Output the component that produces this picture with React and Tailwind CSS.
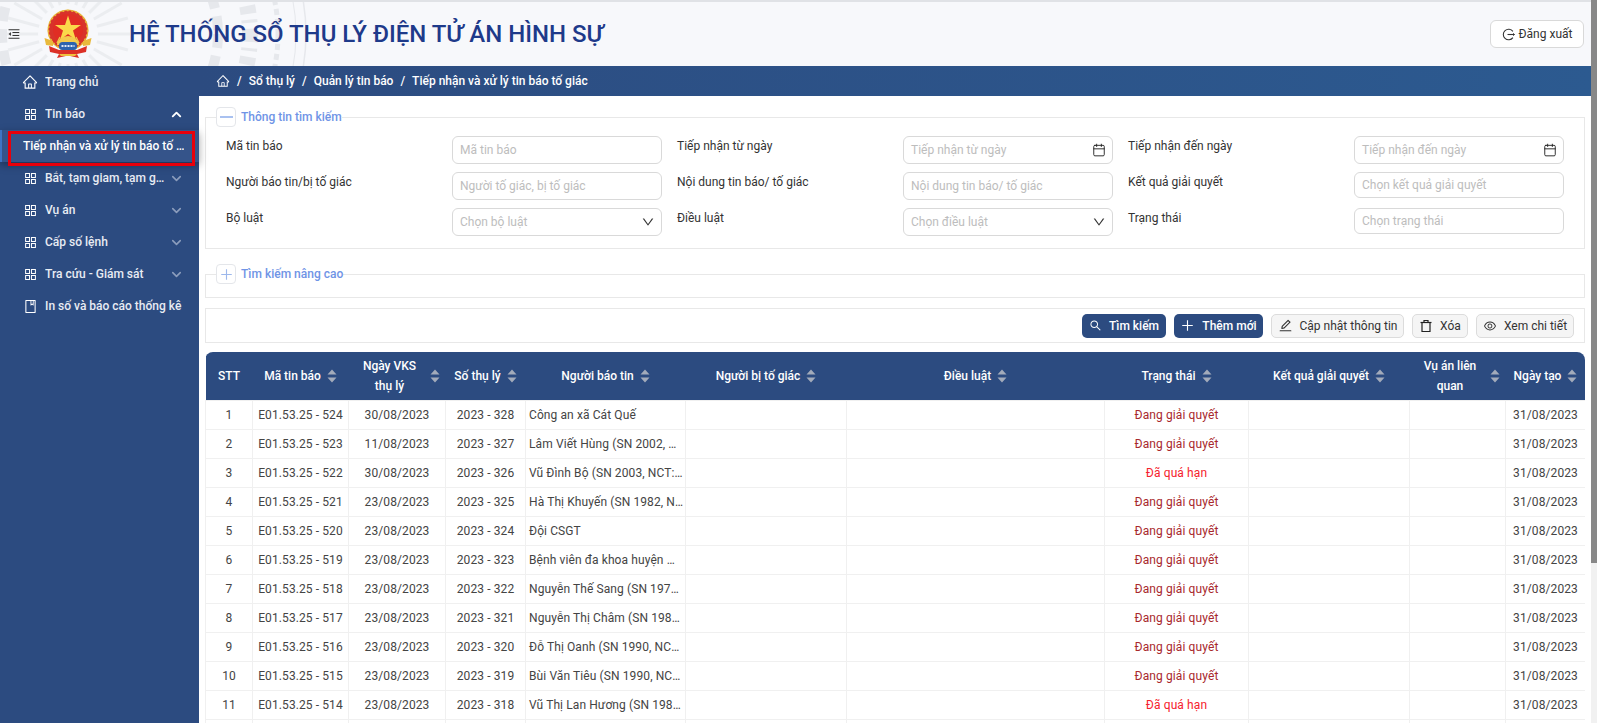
import React from "react";
import {
  AiOutlineHome, AiOutlineAppstore, AiOutlineBook, AiOutlineSearch, AiOutlinePlus,
  AiOutlineEdit, AiOutlineEye, AiOutlineDown, AiOutlineMenuFold,
} from "react-icons/ai";
import { Calendar, ChevronDown, ChevronUp } from "lucide-react";

const rows = [
  ["1", "E01.53.25 - 524", "30/08/2023", "2023 - 328", "Công an xã Cát Quế", "Đang giải quyết"],
  ["2", "E01.53.25 - 523", "11/08/2023", "2023 - 327", "Lâm Viết Hùng (SN 2002, …", "Đang giải quyết"],
  ["3", "E01.53.25 - 522", "30/08/2023", "2023 - 326", "Vũ Đình Bộ (SN 2003, NCT:…", "Đã quá hạn"],
  ["4", "E01.53.25 - 521", "23/08/2023", "2023 - 325", "Hà Thị Khuyến (SN 1982, N…", "Đang giải quyết"],
  ["5", "E01.53.25 - 520", "23/08/2023", "2023 - 324", "Đội CSGT", "Đang giải quyết"],
  ["6", "E01.53.25 - 519", "23/08/2023", "2023 - 323", "Bệnh viên đa khoa huyện …", "Đang giải quyết"],
  ["7", "E01.53.25 - 518", "23/08/2023", "2023 - 322", "Nguyễn Thế Sang (SN 197…", "Đang giải quyết"],
  ["8", "E01.53.25 - 517", "23/08/2023", "2023 - 321", "Nguyễn Thị Châm (SN 198…", "Đang giải quyết"],
  ["9", "E01.53.25 - 516", "23/08/2023", "2023 - 320", "Đỗ Thị Oanh (SN 1990, NC…", "Đang giải quyết"],
  ["10", "E01.53.25 - 515", "23/08/2023", "2023 - 319", "Bùi Văn Tiêu (SN 1990, NC…", "Đang giải quyết"],
  ["11", "E01.53.25 - 514", "23/08/2023", "2023 - 318", "Vũ Thị Lan Hương (SN 198…", "Đã quá hạn"],
];

const colWidths = [47, 96, 97, 80, 160, 161, 258, 144, 161, 96, 80];

// Emblem drawn by hand, there is no image file to use
const Emblem = () => (
  <svg width="48" height="50" viewBox="0 0 48 50" className="shrink-0">
    <circle cx="24" cy="21" r="20.5" fill="#e9b93c" />
    <circle cx="24" cy="21" r="19.5" fill="#d8332b" />
    <circle cx="24" cy="21" r="19.5" fill="none" stroke="#e8b53a" strokeWidth="1.6" strokeDasharray="2 2.5" />
    <circle cx="24" cy="20" r="15" fill="#e02d24" />
    <polygon points="24,6.5 27,16 37,16 29,21.5 32,31 24,25 16,31 19,21.5 11,16 21,16" fill="#fbd94a" />
    <path d="M13 34 L16 28 M35 34 L32 28" stroke="#e8c24a" strokeWidth="1.4" />
    <path d="M0.5 29 L9 32 L9 37 L2 36 Z M47.5 29 L39 32 L39 37 L46 36 Z" fill="#e9b93c" />
    <path d="M13 36 a11 9 0 0 1 22 0 Z" fill="#f3cb4f" />
    <rect x="15" y="33" width="18" height="8" rx="3.5" fill="#2c63ae" />
    <path d="M17.5 37 h13" stroke="#dfe8f5" strokeWidth="2" strokeDasharray="2 1" />
    <path d="M5 37 L15 41 L33 41 L43 37 L42 43 L33 45 L35 49 L24 46.5 L13 49 L15 45 L6 43 Z" fill="#dc3027" />
    <path d="M15 45 L33 45 L31 47 L17 47 Z" fill="#efbf3e" />
  </svg>
);

// Faint seal pattern behind the header
const Watermark = () => {
  const rays = Array.from({ length: 24 }, (_, i) => (i * 360) / 24);
  return (
    <svg width="400" height="66" viewBox="0 0 400 66" className="absolute left-0 top-0" fill="none">
      <g stroke="#ebedf0" strokeWidth="3">
        {rays.map((a) => (
          <line key={a} x1="68" y1="32" x2="68" y2="-30" transform={`rotate(${a} 68 32)`} />
        ))}
      </g>
      <circle cx="68" cy="32" r="30" fill="#f7f8fb" />
      <g stroke="#e6e8ec">
        <circle cx="110" cy="32" r="196" strokeWidth="1.5" />
        <circle cx="110" cy="32" r="186" strokeWidth="1" />
        <circle cx="110" cy="32" r="168" strokeWidth="5" strokeDasharray="6 4" />
        <circle cx="110" cy="32" r="140" strokeWidth="16" strokeDasharray="8 6 3 6" />
        <circle cx="110" cy="32" r="108" strokeWidth="10" strokeDasharray="14 8" />
      </g>
    </svg>
  );
};

const SortIcon = () => (
  <svg width="10" height="14" viewBox="0 0 10 14" className="shrink-0">
    <path d="M5 0.5 L9.5 5.5 H0.5 Z M5 13.5 L0.5 8.5 H9.5 Z" fill="#a3abba" />
  </svg>
);

const LogoutIcon = () => (
  <svg width="13" height="13" viewBox="0 0 13 13" fill="none" stroke="#333" strokeWidth="1.1">
    <path d="M10.9 3.4 A5.3 5.3 0 1 0 10.9 9.6" />
    <path d="M5.5 6.5 H12.5" />
    <path d="M11 5.2 L12.5 6.5 L11 7.8" strokeWidth="0.8" />
  </svg>
);

const TrashIcon = () => (
  <svg width="14" height="14" viewBox="0 0 14 14" fill="none" stroke="#222" strokeWidth="1.2">
    <path d="M1.5 3.5 H12.5" />
    <path d="M3 3.5 V12.5 H11 V3.5" />
    <path d="M5 3.5 V1.5 H9 V3.5" />
  </svg>
);

const MenuItem = ({ icon, label, open, hasArrow }) => (
  <div className="flex h-8 items-center pl-[22px] pr-[15px] text-[12px] font-medium text-[#e8ecf3]">
    <span className="mr-[7px] flex w-[16px] justify-center text-white">{icon}</span>
    <span className="flex-1 truncate">{label}</span>
    {hasArrow && (open
      ? <ChevronUp size={15} strokeWidth={3} className="text-white" />
      : <ChevronDown size={15} strokeWidth={2.5} className="text-[#8c9dbc]" />)}
  </div>
);

const Sidebar = () => (
  <aside className="w-[199px] shrink-0 bg-[#2c4b80] pt-0">
    <MenuItem icon={<AiOutlineHome size={16} />} label="Trang chủ" />
    <MenuItem icon={<AiOutlineAppstore size={15} />} label="Tin báo" open hasArrow />
    <div className="relative flex h-8 items-center border-l-2 border-[#3f74c4] bg-[#35548a] pl-[21px] pr-[10px] text-[12px] font-medium text-white shadow-[0_3px_8px_rgba(0,0,0,0.35)]">
      <span className="truncate">Tiếp nhận và xử lý tin báo tố …</span>
      <div className="absolute left-[6px] top-[1px] h-[35px] w-[187px] border-[3px] border-[#e8000b]" />
    </div>
    <MenuItem icon={<AiOutlineAppstore size={15} />} label="Bắt, tạm giam, tạm g…" hasArrow />
    <MenuItem icon={<AiOutlineAppstore size={15} />} label="Vụ án" hasArrow />
    <MenuItem icon={<AiOutlineAppstore size={15} />} label="Cấp số lệnh" hasArrow />
    <MenuItem icon={<AiOutlineAppstore size={15} />} label="Tra cứu - Giám sát" hasArrow />
    <MenuItem icon={<AiOutlineBook size={15} />} label="In số và báo cáo thống kê" />
  </aside>
);

const Legend = ({ sign, children }) => (
  <legend className="ml-[10px] flex h-5 items-center">
    <span className="flex h-5 w-5 items-center justify-center rounded border border-[#e4e6ea] bg-white text-[#9db8ec]">
      {sign === "minus"
        ? <span className="h-[2px] w-[13px] bg-[#a9c1f0]" />
        : <AiOutlinePlus size={15} />}
    </span>
    <span className="ml-[5px] text-[12px] font-medium text-[#6f94e6]">{children}</span>
  </legend>
);

const Field = ({ label, placeholder, suffix, short }) => (
  <div className="flex items-start">
    <label className="w-[226px] pt-[1px] text-[12px] leading-[18px] text-[#333]">{label}</label>
    <div className={`flex w-[210px] items-center justify-between rounded-md border border-[#d9d9d9] bg-white pl-[7px] pr-[5px] text-[12px] text-[#bdbdbd] ${short ? "h-[26px]" : "h-[28px]"}`}>
      <span>{placeholder}</span>
      {suffix}
    </div>
  </div>
);

const calendar = <Calendar size={14} strokeWidth={1.6} className="mr-[1px] text-[#222]" />;
const arrow = <AiOutlineDown size={14} className="mr-[1px] text-[#333]" />;

const SearchPanel = () => (
  <fieldset className="border border-[#e8e8e8]">
    <Legend sign="minus">Thông tin tìm kiếm</Legend>
    <div className="grid grid-cols-[451px_451px_451px] gap-y-2 pb-[12px] pl-[20px] pt-[9px]">
      <Field label="Mã tin báo" placeholder="Mã tin báo" />
      <Field label="Tiếp nhận từ ngày" placeholder="Tiếp nhận từ ngày" suffix={calendar} />
      <Field label="Tiếp nhận đến ngày" placeholder="Tiếp nhận đến ngày" suffix={calendar} />
      <Field label="Người báo tin/bị tố giác" placeholder="Người tố giác, bị tố giác" />
      <Field label="Nội dung tin báo/ tố giác" placeholder="Nội dung tin báo/ tố giác" />
      <Field label="Kết quả giải quyết" placeholder="Chọn kết quả giải quyết" short />
      <Field label="Bộ luật" placeholder="Chọn bộ luật" suffix={arrow} />
      <Field label="Điều luật" placeholder="Chọn điều luật" suffix={arrow} />
      <Field label="Trạng thái" placeholder="Chọn trạng thái" short />
    </div>
  </fieldset>
);

const PrimaryButton = ({ icon, w, children }) => (
  <button className={`flex h-6 items-center justify-center gap-[7px] rounded-[5px] bg-[#2c4b80] text-[12px] font-medium text-white ${w}`}>
    {icon}{children}
  </button>
);

const GhostButton = ({ icon, w, children }) => (
  <button className={`flex h-6 items-center justify-center gap-[7px] rounded-[5px] border border-[#dcdcdc] bg-[#f5f5f5] text-[12px] text-[#333] ${w}`}>
    {icon}{children}
  </button>
);

const Toolbar = () => (
  <div className="flex h-[35px] items-center justify-end gap-2 border border-[#e8e8e8] pr-[10px]">
    <PrimaryButton w="w-[84px]" icon={<AiOutlineSearch size={13} />}>Tìm kiếm</PrimaryButton>
    <PrimaryButton w="w-[89px]" icon={<AiOutlinePlus size={15} />}>Thêm mới</PrimaryButton>
    <GhostButton w="w-[133px]" icon={<AiOutlineEdit size={15} />}>Cập nhật thông tin</GhostButton>
    <GhostButton w="w-[56px]" icon={<TrashIcon />}>Xóa</GhostButton>
    <GhostButton w="w-[98px]" icon={<AiOutlineEye size={14} />}>Xem chi tiết</GhostButton>
  </div>
);

const Th = ({ children, spread, noSort }) => (
  <th className="px-[6px] text-[12px] font-medium leading-[20px] text-white">
    <div className={`flex items-center ${spread ? "justify-between" : "justify-center gap-[6px]"}`}>
      <span className={spread ? "flex-1 pr-[5px] text-center" : ""}>{children}</span>
      {!noSort && <SortIcon />}
    </div>
  </th>
);

const DataTable = () => (
  <div className="overflow-hidden rounded-t-lg">
    <table className="w-full table-fixed border-collapse">
      <colgroup>
        {colWidths.map((w, i) => <col key={i} style={{ width: w }} />)}
      </colgroup>
      <thead>
        <tr className="h-12 bg-[#2c4b80]">
          <Th noSort>STT</Th>
          <Th>Mã tin báo</Th>
          <Th spread>Ngày VKS<br />thụ lý</Th>
          <Th>Số thụ lý</Th>
          <Th>Người báo tin</Th>
          <Th>Người bị tố giác</Th>
          <Th>Điều luật</Th>
          <Th>Trạng thái</Th>
          <Th>Kết quả giải quyết</Th>
          <Th spread>Vụ án liên<br />quan</Th>
          <Th>Ngày tạo</Th>
        </tr>
      </thead>
      <tbody className="text-[12px] tracking-[0.1px] text-[#444]">
        {rows.map((r) => (
          <tr key={r[0]} className="h-[29px]">
            <td className="border border-[#f0f0f0] text-center">{r[0]}</td>
            <td className="border border-[#f0f0f0] text-center">{r[1]}</td>
            <td className="border border-[#f0f0f0] text-center">{r[2]}</td>
            <td className="border border-[#f0f0f0] text-center">{r[3]}</td>
            <td className="truncate border border-[#f0f0f0] pl-[3px] pr-[2px]">{r[4]}</td>
            <td className="border border-[#f0f0f0]" />
            <td className="border border-[#f0f0f0]" />
            <td className={`border border-[#f0f0f0] text-center ${r[5] === "Đã quá hạn" ? "text-[#f5222d]" : "text-[#a8282c]"}`}>{r[5]}</td>
            <td className="border border-[#f0f0f0]" />
            <td className="border border-[#f0f0f0]" />
            <td className="border border-[#f0f0f0] text-center">31/08/2023</td>
          </tr>
        ))}
        <tr className="h-[29px]">
          {colWidths.map((w, i) => <td key={i} className="border border-[#f0f0f0]" />)}
        </tr>
      </tbody>
    </table>
  </div>
);

const App = () => (
  <div className="flex h-[723px] w-[1597px] overflow-hidden bg-white font-[family-name:Roboto,sans-serif]">
    <div className="flex w-[1591px] flex-col">
      <header className="relative flex h-[66px] shrink-0 items-center overflow-hidden border-t-2 border-[#e0e2e6] bg-[#f7f8fb]">
        <Watermark />
        <AiOutlineMenuFold size={14} className="relative ml-[7px] text-[#333]" />
        <div className="relative ml-[23px]"><Emblem /></div>
        <h1 className="relative ml-[37px] text-[24px] font-medium text-[#1e3a8a]">HỆ THỐNG SỔ THỤ LÝ ĐIỆN TỬ ÁN HÌNH SỰ</h1>
        <button className="relative ml-auto mr-[7px] flex h-[28px] w-[94px] items-center justify-center gap-[4px] rounded-md border border-[#d9d9d9] bg-white text-[12px] text-[#333]">
          <LogoutIcon />Đăng xuất
        </button>
      </header>
      <div className="flex min-h-0 flex-1">
        <Sidebar />
        <div className="flex min-w-0 flex-1 flex-col">
          <nav className="flex h-[30px] shrink-0 items-center gap-[7px] bg-gradient-to-r from-[#2c4b80] to-[#2c5a90] pl-[17px] text-[12px] font-medium text-white">
            <AiOutlineHome size={14} />
            <span>/</span><span>Sổ thụ lý</span>
            <span>/</span><span>Quản lý tin báo</span>
            <span>/</span><span>Tiếp nhận và xử lý tin báo tố giác</span>
          </nav>
          <main className="flex flex-col px-[6px] pt-[11px]">
            <SearchPanel />
            <fieldset className="mt-[15px] border border-[#e8e8e8] pb-[13px]">
              <Legend sign="plus">Tìm kiếm nâng cao</Legend>
            </fieldset>
            <div className="mt-[10px]"><Toolbar /></div>
            <div className="mt-[9px]"><DataTable /></div>
          </main>
        </div>
      </div>
    </div>
    <div className="flex w-[6px] shrink-0 flex-col bg-[#f1f1f1]">
      <div className="h-[563px] bg-[#888888]" />
    </div>
  </div>
);

export default App;
